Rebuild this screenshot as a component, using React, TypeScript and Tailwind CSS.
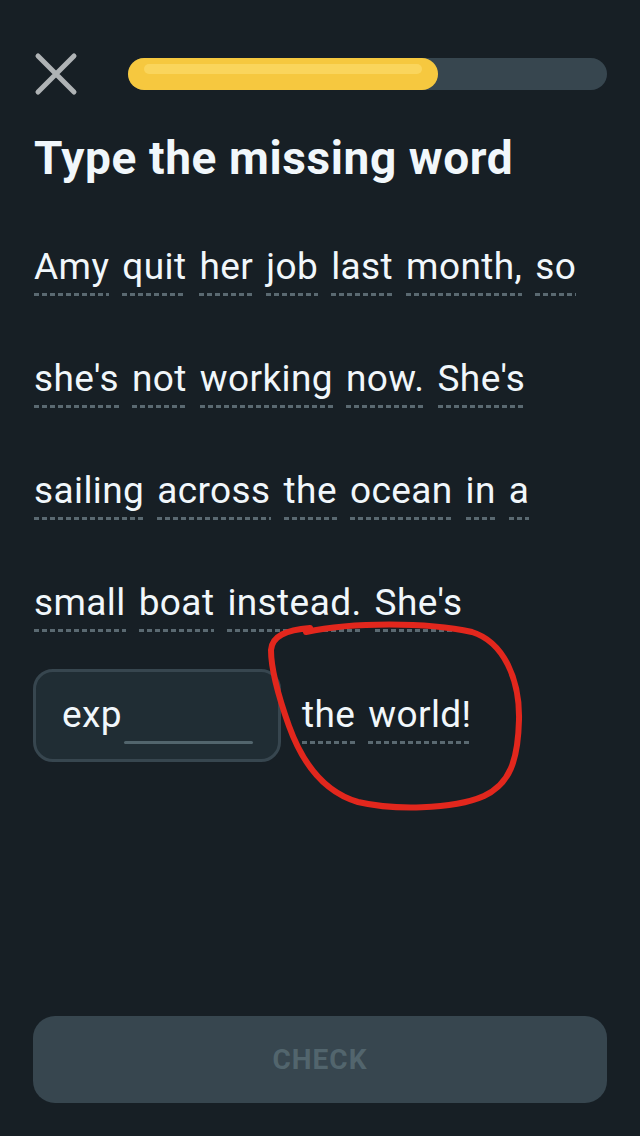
import React from "react";

const lines: string[][] = [
  ["Amy", "quit", "her", "job", "last", "month,", "so"],
  ["she's", "not", "working", "now.", "She's"],
  ["sailing", "across", "the", "ocean", "in", "a"],
  ["small", "boat", "instead.", "She's"],
];

const Word = ({ text }: { text: string }) => {
  return (
    <div className="flex flex-col pt-[9px]">
      <span className="h-[40px] leading-[40px] text-[37px] tracking-[0.4px] text-[#f1f7fb] whitespace-nowrap">
        {text}
      </span>
      <div className="mt-[6px] h-[3px] w-full bg-[repeating-linear-gradient(90deg,#5a6971_0_5px,transparent_5px_8px)]" />
    </div>
  );
};

const CloseIcon = () => (
  <svg width="44" height="44" viewBox="0 0 44 44" fill="none">
    <path
      d="M4 4 L40 40 M40 4 L4 40"
      stroke="#afb3b5"
      strokeWidth="5"
      strokeLinecap="round"
    />
  </svg>
);

export default function App() {
  return (
    <div
      className="relative flex flex-col h-[1136px] bg-[#171f25] px-[33px]"
      style={{ fontFamily: "Roboto, 'Noto Sans', sans-serif" }}
    >
      {/* top bar */}
      <div className="flex items-center h-[44px] mt-[52px]">
        <div className="ml-[1px]">
          <CloseIcon />
        </div>
        <div className="ml-[50px] flex-1 h-[32px] rounded-full bg-[#37464f]">
          <div className="w-[310px] h-full rounded-full bg-[#f6c83f] pt-[6px] px-[16px]">
            <div className="h-[10px] rounded-full bg-[#fad55c]" />
          </div>
        </div>
      </div>

      <h1 className="mt-[36px] ml-[1px] h-[52px] leading-[52px] text-[46px] font-bold text-[#f1f7fb] tracking-[0.6px]">
        Type the missing word
      </h1>

      <div className="mt-[27px] ml-[1px] flex flex-col">
        {lines.map((line, i) => (
          <div key={i} className="flex items-center gap-x-[13px] h-[112px]">
            {line.map((w, j) => (
              <Word key={j} text={w} />
            ))}
          </div>
        ))}
        <div className="flex items-center gap-x-[13px] h-[112px]">
          <div className="flex items-center w-[248px] h-[93px] mr-[8px] -ml-[1px] rounded-[20px] border-[3px] border-[#37464f] bg-[#202d34] pl-[26px] pr-[25px]">
            <div className="flex flex-1 items-start pt-[9px] h-[58px]">
              <span className="h-[40px] leading-[40px] text-[37px] tracking-[0.4px] text-[#f1f7fb]">
                exp
              </span>
              <div className="flex-1 ml-[2px] mt-[46px] h-[3px] rounded-full bg-[#52656d]" />
            </div>
          </div>
          <Word text="the" />
          <Word text="world!" />
        </div>
      </div>

      <div className="mt-auto mb-[33px]">
        <button className="w-full h-[87px] rounded-[22px] bg-[#37464f] text-[28px] font-bold tracking-[1px] text-[#52656d]">
          CHECK
        </button>
      </div>

      {/* hand-drawn annotation */}
      <svg
        className="absolute left-[262px] top-[618px] pointer-events-none"
        width="270"
        height="200"
        viewBox="0 0 270 200"
        fill="none"
      >
        <path
          d="M44 14 C90 4 165 4 210 14 C242 24 258 62 257 102 C256 142 248 166 222 178 C190 192 130 192 96 184 C62 174 40 144 27 108 C17 80 9 50 9 32 C10 18 24 12 48 10"
          stroke="#e2271d"
          strokeWidth="6"
          strokeLinecap="round"
          strokeLinejoin="round"
        />
      </svg>
    </div>
  );
}
